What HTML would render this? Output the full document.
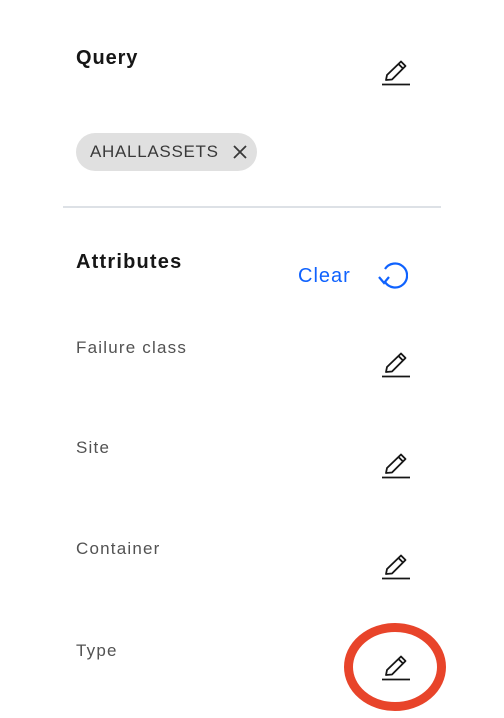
<!DOCTYPE html>
<html><head><style>
body{margin:0;width:504px;height:718px;background:#fff;font-family:"Liberation Sans",sans-serif;position:relative;overflow:hidden}
.a{position:absolute}
.h{font-weight:bold;font-size:20px;color:#161616;letter-spacing:0.9px}
.l{font-size:17px;color:#525252;left:76px;letter-spacing:1.2px}
.tag{left:76px;top:133px;width:181px;height:38px;background:#e0e0e0;border-radius:19px;font-size:17px;color:#393939;line-height:38px;box-sizing:border-box;padding-left:14px;letter-spacing:0.7px}
</style></head><body>
<div class="a h" style="left:76px;top:47px">Query</div>
<div class="a tag">AHALLASSETS<svg style="position:absolute;left:157px;top:12px" width="14" height="14" viewBox="0 0 14 14"><path d="M1 1L13 13M13 1L1 13" stroke="#393939" stroke-width="1.8"/></svg></div>
<div class="a" style="left:63px;top:206px;width:378px;height:2px;background:#dde1e6"></div>
<div class="a h" style="left:76px;top:251px;letter-spacing:1.2px">Attributes</div>
<div class="a" style="left:298px;top:265px;font-size:20px;color:#0f62fe;letter-spacing:1px">Clear</div>
<svg class="a" style="left:376px;top:261px" width="32" height="30" viewBox="0 0 32 30"><path d="M9 21A12 12 0 1 0 9 8" fill="none" stroke="#0f62fe" stroke-width="2.2"/><path d="M3 16L8 22L13 16" fill="none" stroke="#0f62fe" stroke-width="2.2"/></svg>
<div class="a l" style="top:338px">Failure class</div>
<div class="a l" style="top:438px">Site</div>
<div class="a l" style="top:539px">Container</div>
<div class="a l" style="top:641px">Type</div>
<svg width="0" height="0" style="position:absolute"><defs><g id="p"><path d="M0 24.5H28" stroke="#161616" stroke-width="1.8"/><path d="M4 20L5 15L19 1.5L23.5 6L10 19.5Z M16.5 4L21 8.5" fill="none" stroke="#161616" stroke-width="1.8" stroke-linejoin="round"/></g></defs></svg>
<svg class="a" style="left:382px;top:60px" width="28" height="26"><use href="#p"/></svg>
<svg class="a" style="left:382px;top:352px" width="28" height="26"><use href="#p"/></svg>
<svg class="a" style="left:382px;top:453px" width="28" height="26"><use href="#p"/></svg>
<svg class="a" style="left:382px;top:554px" width="28" height="26"><use href="#p"/></svg>
<svg class="a" style="left:382px;top:655px" width="28" height="26"><use href="#p"/></svg>
<svg class="a" style="left:340px;top:618px" width="110" height="98"><ellipse cx="55" cy="49" rx="46.5" ry="39.5" fill="none" stroke="#e8442a" stroke-width="9"/></svg>
</body></html>
